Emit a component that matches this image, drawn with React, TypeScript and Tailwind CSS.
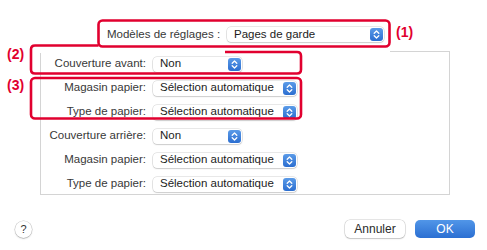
import React from "react";

const Stepper = () => (
  <span className="w-[13px] h-[13px] rounded-[3px] bg-linear-to-b from-[#5b9be8] to-[#2b6ed0] flex items-center justify-center shrink-0">
    <svg width="9" height="11" viewBox="0 0 9 11">
      <path
        d="M2.2 4.2 L4.5 2 L6.8 4.2 M2.2 6.8 L4.5 9 L6.8 6.8"
        stroke="white"
        strokeWidth="1.3"
        fill="none"
        strokeLinecap="round"
        strokeLinejoin="round"
      />
    </svg>
  </span>
);

function Select({ label, w }: { label: string; w: string }) {
  return (
    <div
      className={`h-[15px] ${w} rounded-[4px] bg-white shadow-[0_0_0_0.5px_rgba(0,0,0,0.18),0_1px_1.5px_rgba(0,0,0,0.12)] flex items-center pl-[7px] pr-[1px]`}
    >
      <span className="flex-1 text-[11.5px] leading-none text-[#1c1c1c] whitespace-nowrap">
        {label}
      </span>
      <Stepper />
    </div>
  );
}

function Row({ label, value, w }: { label: string; value: string; w: string }) {
  return (
    <div className="flex items-center h-[16px]">
      <div className="w-[105px] text-right text-[11.5px] leading-none text-[#383838] whitespace-nowrap">
        {label}
      </div>
      <div className="ml-[7px]">
        <Select label={value} w={w} />
      </div>
    </div>
  );
}

export default function App() {
  const red = "#e1002f";
  return (
    <div
      className="relative w-[487px] h-[250px] bg-white overflow-hidden"
      style={{ fontFamily: '"Liberation Sans", Arial, sans-serif' }}
    >
      {/* header */}
      <div className="flex items-center h-[15px] mt-[27px] pl-[107px]">
        <div className="w-[120px] text-[11.5px] leading-none text-[#383838] whitespace-nowrap">
          Modèles de réglages :
        </div>
        <Select label="Pages de garde" w="w-[157px]" />
      </div>

      {/* panel */}
      <div className="ml-[40px] mt-[9px] w-[410px] h-[144px] border border-[#d4d4d4] flex flex-col gap-[8px] pt-[4px]">
        <Row label="Couverture avant:" value="Non" w="w-[89px]" />
        <Row label="Magasin papier:" value="Sélection automatique" w="w-[144px]" />
        <Row label="Type de papier:" value="Sélection automatique" w="w-[144px]" />
        <Row label="Couverture arrière:" value="Non" w="w-[89px]" />
        <Row label="Magasin papier:" value="Sélection automatique" w="w-[144px]" />
        <Row label="Type de papier:" value="Sélection automatique" w="w-[144px]" />
      </div>

      {/* footer */}
      <div className="flex items-center mt-[25px] pl-[15px] pr-[12px] h-[18px]">
        <div className="w-[17px] h-[17px] rounded-full bg-white shadow-[0_0_0_0.5px_rgba(0,0,0,0.22),0_1px_1.5px_rgba(0,0,0,0.18)] flex items-center justify-center text-[11px] leading-none text-[#333]">
          ?
        </div>
        <div className="flex-1" />
        <div className="w-[60px] h-[18px] rounded-[5px] bg-white shadow-[0_0_0_0.5px_rgba(0,0,0,0.2),0_1px_1.5px_rgba(0,0,0,0.15)] flex items-center justify-center text-[12px] leading-none text-[#2a2a2a]">
          Annuler
        </div>
        <div className="ml-[10px] w-[60px] h-[18px] rounded-[5px] bg-linear-to-b from-[#5196e8] to-[#2b6fd2] flex items-center justify-center text-[12px] leading-none text-white">
          OK
        </div>
      </div>

      {/* annotations */}
      <svg
        className="absolute left-0 top-0 pointer-events-none"
        width="487"
        height="250"
        viewBox="0 0 487 250"
      >
        <rect x="39" y="48" width="351" height="5" fill="white" />
        <rect x="98.5" y="20.5" width="291" height="26" rx="4" fill="none" stroke={red} strokeWidth="2.6" />
        <path
          d="M98.5 45.5 H35 Q31 45.5 31 49.5 V69.5 Q31 73.5 35 73.5 H297 Q301 73.5 301 69.5 V56 Q301 52 297 52 H225"
          fill="none"
          stroke={red}
          strokeWidth="2.6"
        />
        <rect x="31" y="78" width="270" height="40.5" rx="4" fill="none" stroke={red} strokeWidth="2.6" />
      </svg>
      <div className="absolute left-[396px] top-[25px] text-[14px] font-bold leading-none text-[#e1002f]">(1)</div>
      <div className="absolute left-[7px] top-[47px] text-[14px] font-bold leading-none text-[#e1002f]">(2)</div>
      <div className="absolute left-[7px] top-[78px] text-[14px] font-bold leading-none text-[#e1002f]">(3)</div>
    </div>
  );
}
